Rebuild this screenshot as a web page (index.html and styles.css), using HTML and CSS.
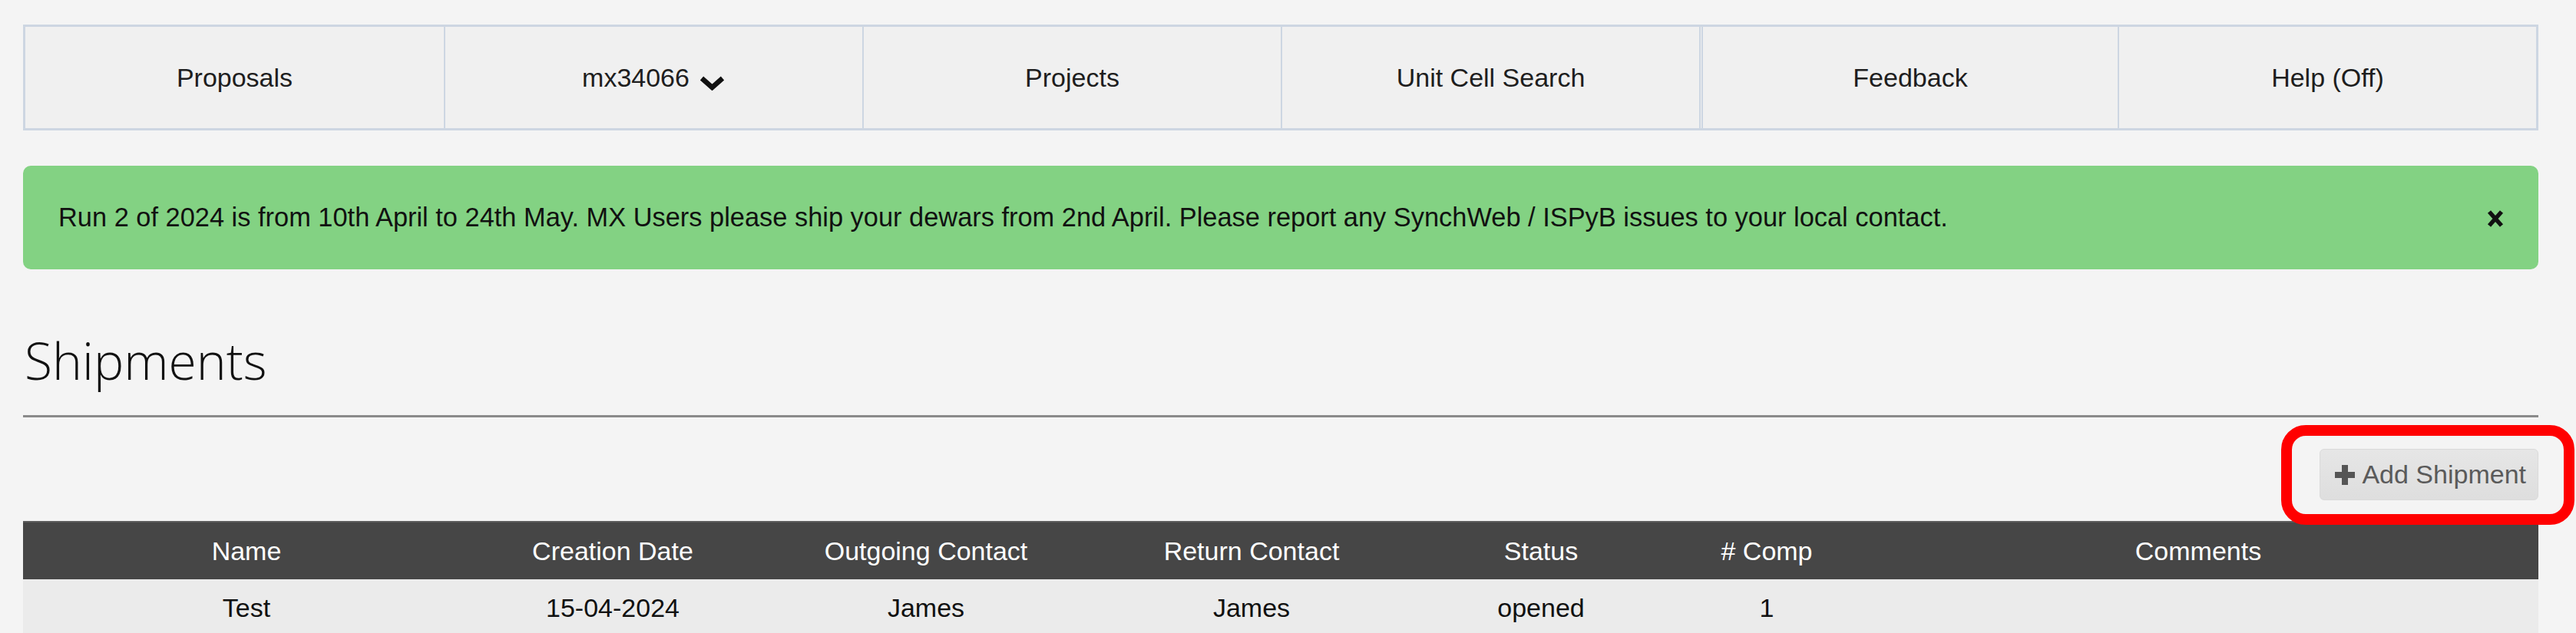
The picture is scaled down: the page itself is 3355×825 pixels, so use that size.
FILE: index.html
```html
<!DOCTYPE html>
<html lang="en">
<head>
<meta charset="utf-8">
<title>Shipments</title>
<link rel="stylesheet" href="styles.css">
</head>
<body>
<div class="page">
  <nav class="nav">
    <a class="nav-item">Proposals</a>
    <a class="nav-item">mx34066
      <svg class="chev" width="35" height="20" viewBox="0 0 35 20"><polyline points="4,4 17.5,16 31,4" fill="none" stroke="#111" stroke-width="6.5" stroke-linejoin="miter"/></svg>
    </a>
    <a class="nav-item">Projects</a>
    <a class="nav-item">Unit Cell Search</a>
    <a class="nav-item nav-item-sep">Feedback</a>
    <a class="nav-item">Help (Off)</a>
  </nav>

  <div class="alert">
    <span class="alert-text">Run 2 of 2024 is from 10th April to 24th May. MX Users please ship your dewars from 2nd April. Please report any SynchWeb / ISPyB issues to your local contact.</span>
    <svg class="close" width="22" height="22" viewBox="0 0 22 22"><path d="M3 2 L19 20 M19 2 L3 20" stroke="#111" stroke-width="5.5" fill="none"/></svg>
  </div>

  <h1 class="title">Shipments</h1>

  <div class="toolbar">
    <div class="btn-wrap">
      <button class="btn">
        <svg class="plus" width="28" height="28" viewBox="0 0 28 28"><path d="M14 1 V27 M1 14 H27" stroke="#555" stroke-width="8" fill="none"/></svg>
        <span>Add Shipment</span>
      </button>
      <div class="highlight"></div>
    </div>
  </div>

  <table class="grid">
    <colgroup>
      <col class="c1"><col class="c2"><col class="c3"><col class="c4"><col class="c5"><col class="c6"><col class="c7">
    </colgroup>
    <thead>
      <tr><th>Name</th><th>Creation Date</th><th>Outgoing Contact</th><th>Return Contact</th><th>Status</th><th># Comp</th><th>Comments</th></tr>
    </thead>
    <tbody>
      <tr><td>Test</td><td>15-04-2024</td><td>James</td><td>James</td><td>opened</td><td>1</td><td></td></tr>
    </tbody>
  </table>
</div>
</body>
</html>
```

FILE: styles.css
```css
html, body {
  margin: 0;
  padding: 0;
  background: #f4f4f4;
}
body {
  font-family: "Liberation Sans", Arial, sans-serif;
  font-size: 34px;
  color: #1e1e1e;
}
.page {
  width: 3276px;
  padding: 32px 0 0 30px;
}
.nav {
  display: grid;
  grid-template-columns: repeat(6, 1fr);
  height: 138px;
  box-sizing: border-box;
  border: 3px solid #cdd6e2;
  background: #f0f0f0;
}
.nav-item {
  display: flex;
  align-items: center;
  justify-content: center;
  gap: 12px;
  border-left: 2px solid #cdd6e2;
  color: #1e1e1e;
}
.nav-item:first-child { border-left: none; }
.nav-item-sep { border-left: 5px double #cdd6e2; }
.chev { margin-top: 14px; }

.alert {
  margin-top: 46px;
  height: 135px;
  box-sizing: border-box;
  border-radius: 10px;
  background: #83d283;
  display: flex;
  align-items: center;
  justify-content: space-between;
  padding: 0 45px 0 46px;
  color: #111;
}
.alert-text { font-size: 34.4px; }
.close { margin-top: 2px; }

.title {
  margin: 0;
  margin-top: 78px;
  font-family: "Open Sans", "Noto Sans", sans-serif;
  font-weight: 300;
  font-size: 66px;
  line-height: 80px;
  color: #111;
  padding-bottom: 32px;
  border-bottom: 3px solid #8a8a8a;
  padding-left: 2px;
}

.toolbar {
  display: flex;
  justify-content: flex-end;
  margin-top: 41px;
}
.btn-wrap { position: relative; }
.btn {
  display: flex;
  align-items: center;
  gap: 8px;
  height: 67px;
  padding: 0 15px 0 18px;
  border: 1px solid #dadada;
  border-radius: 6px;
  background: linear-gradient(#e6e6e6, #dedede);
  font-family: "Liberation Sans", Arial, sans-serif;
  font-size: 34px;
  color: #5a5a5a;
}
.highlight {
  position: absolute;
  left: -50px;
  right: -47px;
  top: -31px;
  bottom: -32px;
  border: 14px solid #ff0000;
  border-radius: 32px;
  pointer-events: none;
}

.grid {
  margin-top: 27px;
  width: 100%;
  border-collapse: collapse;
  table-layout: fixed;
}
.c1 { width: 582px; }
.c2 { width: 372px; }
.c3 { width: 444px; }
.c4 { width: 404px; }
.c5 { width: 350px; }
.c6 { width: 238px; }
.c7 { width: 886px; }
.grid th {
  height: 74px;
  padding: 0;
  background: #464646;
  color: #fff;
  font-weight: normal;
  text-align: center;
  border-top: 2px solid #5c5c5c;
}
.grid td {
  height: 74px;
  padding: 0;
  background: #ebebeb;
  text-align: center;
  color: #111;
}
```
